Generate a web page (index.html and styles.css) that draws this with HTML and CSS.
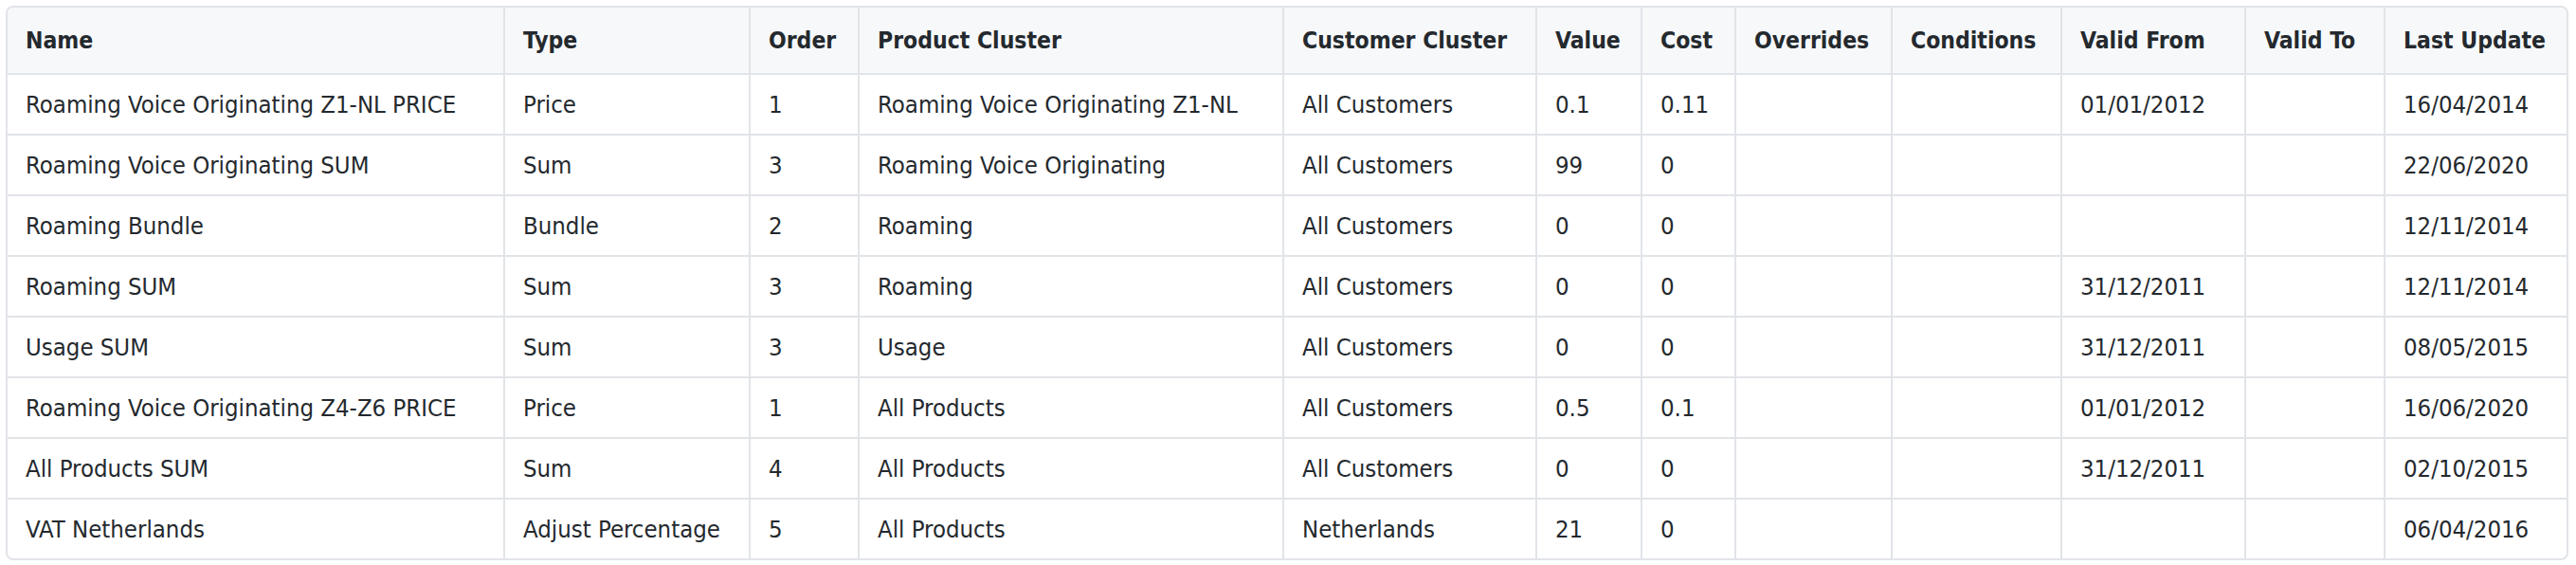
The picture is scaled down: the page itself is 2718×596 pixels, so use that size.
FILE: index.html
```html
<!DOCTYPE html>
<html lang="en">
<head>
<meta charset="utf-8">
<title>Pricing rules</title>
<link rel="stylesheet" href="styles.css">
</head>
<body>
<div class="table-wrap">
<table class="rules">
<colgroup>
<col class="c-name"><col class="c-type"><col class="c-order"><col class="c-product"><col class="c-customer"><col class="c-value"><col class="c-cost"><col class="c-overrides"><col class="c-conditions"><col class="c-from"><col class="c-to"><col class="c-update">
</colgroup>
<thead>
<tr><th>Name</th><th>Type</th><th>Order</th><th>Product Cluster</th><th>Customer Cluster</th><th>Value</th><th>Cost</th><th>Overrides</th><th>Conditions</th><th>Valid From</th><th>Valid To</th><th>Last Update</th></tr>
</thead>
<tbody>
<tr><td>Roaming Voice Originating Z1-NL PRICE</td><td>Price</td><td>1</td><td>Roaming Voice Originating Z1-NL</td><td>All Customers</td><td>0.1</td><td>0.11</td><td></td><td></td><td>01/01/2012</td><td></td><td>16/04/2014</td></tr>
<tr><td>Roaming Voice Originating SUM</td><td>Sum</td><td>3</td><td>Roaming Voice Originating</td><td>All Customers</td><td>99</td><td>0</td><td></td><td></td><td></td><td></td><td>22/06/2020</td></tr>
<tr><td>Roaming Bundle</td><td>Bundle</td><td>2</td><td>Roaming</td><td>All Customers</td><td>0</td><td>0</td><td></td><td></td><td></td><td></td><td>12/11/2014</td></tr>
<tr><td>Roaming SUM</td><td>Sum</td><td>3</td><td>Roaming</td><td>All Customers</td><td>0</td><td>0</td><td></td><td></td><td>31/12/2011</td><td></td><td>12/11/2014</td></tr>
<tr><td>Usage SUM</td><td>Sum</td><td>3</td><td>Usage</td><td>All Customers</td><td>0</td><td>0</td><td></td><td></td><td>31/12/2011</td><td></td><td>08/05/2015</td></tr>
<tr><td>Roaming Voice Originating Z4-Z6 PRICE</td><td>Price</td><td>1</td><td>All Products</td><td>All Customers</td><td>0.5</td><td>0.1</td><td></td><td></td><td>01/01/2012</td><td></td><td>16/06/2020</td></tr>
<tr><td>All Products SUM</td><td>Sum</td><td>4</td><td>All Products</td><td>All Customers</td><td>0</td><td>0</td><td></td><td></td><td>31/12/2011</td><td></td><td>02/10/2015</td></tr>
<tr><td>VAT Netherlands</td><td>Adjust Percentage</td><td>5</td><td>All Products</td><td>Netherlands</td><td>21</td><td>0</td><td></td><td></td><td></td><td></td><td>06/04/2016</td></tr>
</tbody>
</table>
</div>
</body>
</html>
```
FILE: styles.css
```css
html, body {
  margin: 0;
  padding: 0;
  background: #ffffff;
}
body {
  padding: 6px;
  font-family: "DejaVu Sans Condensed", "DejaVu Sans", sans-serif;
  font-size: 25.5px;
  color: #24292e;
}
.table-wrap {
  width: 2704px;
  border: 2px solid #e1e4e8;
  border-radius: 8px;
  overflow: hidden;
  box-sizing: border-box;
}
.rules {
  width: 2700px;
  table-layout: fixed;
  border-collapse: collapse;
}
.c-name { width: 524px; }
.c-type { width: 259px; }
.c-order { width: 115px; }
.c-product { width: 448px; }
.c-customer { width: 267px; }
.c-value { width: 111px; }
.c-cost { width: 99px; }
.c-overrides { width: 165px; }
.c-conditions { width: 179px; }
.c-from { width: 194px; }
.c-to { width: 147px; }
.c-update { width: 192px; }
.rules th, .rules td {
  border-right: 2px solid #e1e4e8;
  border-bottom: 2px solid #e1e4e8;
  padding: 0 0 0 19px;
  text-align: left;
  vertical-align: middle;
  white-space: nowrap;
  overflow: hidden;
}
.rules th:last-child, .rules td:last-child { border-right: none; }
.rules tbody tr:last-child td { border-bottom: none; }
.rules th {
  height: 69px;
  background: #f6f8fa;
  font-weight: bold;
  font-size: 24.5px;
}
.rules td {
  height: 62px;
}
```
